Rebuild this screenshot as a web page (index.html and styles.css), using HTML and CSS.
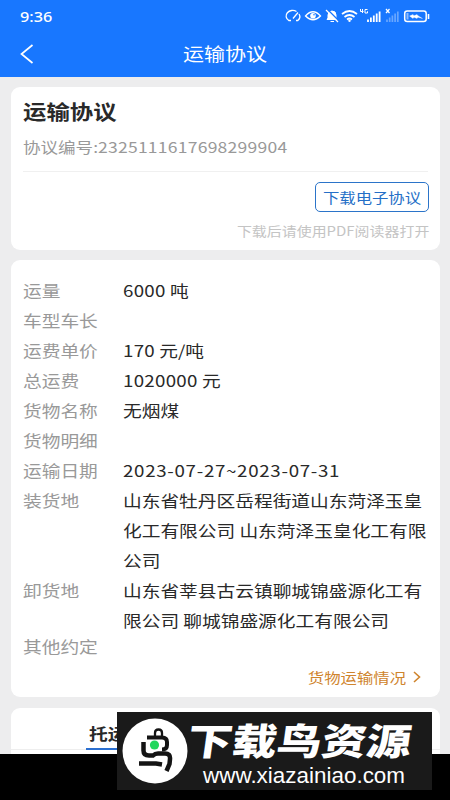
FILE: index.html
```html
<!DOCTYPE html>
<html lang="zh-CN">
<head>
<meta charset="utf-8">
<title>运输协议</title>
<link rel="stylesheet" href="styles.css">
</head>
<body>
<div class="screen">
  <header class="top">
    <div class="status">
      <span class="clock">9:36</span>
      <svg class="status-icons" width="152" height="16" viewBox="0 0 152 16" fill="none" stroke="#fff" stroke-width="1.5">
        <path d="M6 12.500H3.800A6.500 5.500 0 0 1 11.500 3.500M14 6A6.500 5.500 0 0 1 12.800 12.500H11M8 10.500L13 4.500" stroke-width="1.300"/>
        <path d="M20.500 8Q28 -.500 35.500 8Q28 15.500 20.500 8Z" stroke-width="1.300"/><circle cx="28" cy="7.800" r="2.800" fill="#fff" stroke="none"/><circle cx="29" cy="6.800" r=".8" fill="#1877ff" stroke="none"/>
        <path d="M42 11.500L43 10V7Q43 3 47 3T51 7V10L52.500 11.500ZM45.500 13.500H49" fill="#fff" stroke-width="1"/><path d="M42 1L54 13" stroke="#1877ff" stroke-width="1.500"/><path d="M41 2L53 14" stroke-width="1.300"/>
        <path d="M57 6Q64.500 0 72 6M59.500 9Q64.500 5 69.500 9M62 11.500Q64.500 9.500 67 11.500" stroke-width="1.700"/><circle cx="64.500" cy="12.800" r="1.200" fill="#fff" stroke="none"/>
        <path d="M77.500 1V5M75.500 1V3.500H78.500M82.500 1.500H80V5H82.500V3.300" stroke-width="1"/>
        <path d="M83 14V11.500M85.900 14V9.500M88.800 14V7.500M91.700 14V5.500M94.600 14V3.500" stroke-width="1.800"/>
        <path d="M101 1L104.500 5M104.500 1L101 5" stroke-width="1.200"/>
        <path d="M102 14V11.500M104.700 14V9.500M107.400 14V7.500M110.100 14V5.500M112.800 14V3.500" opacity=".35" stroke-width="1.700"/>
        <rect x="119.700" y="3" width="21.500" height="10.500" rx="2.500"/><path d="M143.500 6V11" stroke-width="1.600"/><path d="M122.500 5V11.500" opacity=".5" stroke-width="2"/><path d="M124.500 8L128 6.500L129 7.700L132 6.500L133 7.700L137.500 10.500L133 9.300L132 10.500L129 9.300L128 10.500Z" fill="#fff" stroke-width=".3"/>
      </svg>
    </div>
    <nav class="nav">
      <svg class="back" width="14" height="20" viewBox="0 0 14 20" fill="none" stroke="#fff" stroke-width="1.700"><path d="M12.500 1L1.500 10L12.500 19"/></svg>
      <h1 class="nav-title">运输协议</h1>
    </nav>
  </header>

  <main class="content">
    <section class="card summary">
      <h2 class="heading"><span class="wide">运输协议</span></h2>
      <p class="number"><span class="wide">协议编号:<span class="digits">2325111617698299904</span></span></p>
      <div class="download-area">
        <button class="download"><span class="wide">下载电子协议</span></button>
        <p class="hint"><span class="wide">下载后请使用PDF阅读器打开</span></p>
      </div>
    </section>

    <section class="card details">
      <dl class="fields">
        <dt><span class="wide">运量</span></dt><dd><span class="wide"><span class="amount">6000</span> 吨</span></dd>
        <dt><span class="wide">车型车长</span></dt><dd></dd>
        <dt><span class="wide">运费单价</span></dt><dd><span class="wide"><span class="amount">170</span> 元/吨</span></dd>
        <dt><span class="wide">总运费</span></dt><dd><span class="wide"><span class="amount">1020000</span> 元</span></dd>
        <dt><span class="wide">货物名称</span></dt><dd><span class="wide">无烟煤</span></dd>
        <dt><span class="wide">货物明细</span></dt><dd></dd>
        <dt><span class="wide">运输日期</span></dt><dd><span class="wide date">2023-07-27~2023-07-31</span></dd>
        <dt><span class="wide">装货地</span></dt><dd><span class="wide">山东省牡丹区岳程街道山东菏泽玉皇<br>化工有限公司 山东菏泽玉皇化工有限<br>公司</span></dd>
        <dt><span class="wide">卸货地</span></dt><dd><span class="wide">山东省莘县古云镇聊城锦盛源化工有<br>限公司 聊城锦盛源化工有限公司</span></dd>
        <dt class="last"><span class="wide">其他约定</span></dt><dd class="last"></dd>
      </dl>
      <a class="more"><span class="wide">货物运输情况</span><svg width="8" height="12" viewBox="0 0 8 12" fill="none" stroke="#cf842d" stroke-width="1.600"><path d="M1 1L6.500 6L1 11"/></svg></a>
    </section>

    <section class="card tabs"><div class="tab"><span class="wide">托运方</span></div></section>
  </main>
  <div class="bottom"></div>

  <aside class="banner">
    <svg class="logo" width="66" height="66" viewBox="0 0 66 66" fill="none" stroke="#141414">
      <circle cx="33" cy="33" r="32.500" fill="#fff" stroke="none"/>
      <path d="M33 18V15Q33 11.500 36.500 11.500T40 15V18" stroke-width="2.300"/>
      <path d="M25 19.500H40Q45 19.500 45 24V27Q45 31.500 40 31.500" stroke-width="4"/>
      <path d="M21.500 24V32.500Q21.500 37.500 27 37.500H31Q33 35.500 36 35.500H43Q48.500 35.500 48 41L47.500 46L44.500 53" stroke-width="4.500"/>
      <path d="M17 45.500H34L40 46.500" stroke-width="4.500"/>
      <circle cx="32.500" cy="27" r="4.600" fill="#22d75c" stroke="none"/>
    </svg>
    <div class="brand"><strong>下载鸟资源</strong><span>www.xiazainiao.com</span></div>
  </aside>
</div>
</body>
</html>
```

FILE: styles.css
```css
* { box-sizing: border-box; margin: 0; padding: 0; }
body { background: #ededee; font-family: "Noto Sans CJK SC", sans-serif; color: #292929; }
.screen { position: relative; width: 450px; height: 800px; overflow: hidden; display: flex; flex-direction: column; }
.wide { display: inline-block; white-space: nowrap; transform: scaleX(1.169); transform-origin: left center; }
.top { height: 77px; flex: none; background: #1877ff; color: #fff; }
.status { height: 31px; display: flex; align-items: center; justify-content: space-between; padding: 0 13px 0 20px; }
.clock { font: 500 14.500px "Noto Sans", sans-serif; transform: scaleX(1.120); transform-origin: left; }
.nav { height: 46px; padding: 0 20px; display: grid; grid-template-columns: 14px 1fr 14px; align-items: center; }
.nav-title { font-size: 18px; font-weight: 400; line-height: 44px; padding-bottom: 2px; text-align: center; transform: scaleX(1.169); }
.content { height: 677px; overflow: hidden; padding: 10px 10px 0 11px; display: flex; flex-direction: column; gap: 10px; flex: none; }
.card { background: #fff; border-radius: 9px; flex: none; padding: 0 12px; }
.summary { height: 163px; }
.heading { height: 49px; font-size: 20px; line-height: 49px; font-weight: 700; }
.number { height: 36px; line-height: 22px; font-size: 15px; color: #999; border-bottom: 1px solid #f0f0f0; }
.digits { letter-spacing: .200px; }
.download-area { display: flex; flex-direction: column; align-items: flex-end; padding-top: 10px; margin-right: -1px; }
.download { width: 114px; height: 30px; background: #fff; border: 1.500px solid #2b74c9; border-radius: 5px; color: #256fc7; font: 14px/27px "Noto Sans CJK SC", sans-serif; }
.download .wide { transform-origin: center; }
.hint { font-size: 12.700px; line-height: 20px; color: #c4c4c4; margin-top: 9px; }
.hint .wide { transform: scaleX(1.178); transform-origin: right center; }
.details { height: 437px; padding-top: 15px; }
.fields { display: grid; grid-template-columns: 100px 1fr; font-size: 16px; line-height: 30px; }
.fields dt { color: #999; }
.fields dd { min-height: 30px; }
.fields .last { margin-top: -4px; }
.amount { letter-spacing: .250px; }
.date { letter-spacing: .600px; }
.more { display: flex; justify-content: flex-end; align-items: center; height: 30px; margin-top: 1px; padding-right: 7px; gap: 7px; color: #cf842d; font-size: 14px; }
.more .wide { transform-origin: right center; }
.tabs { height: 60px; margin-top: 1px; padding: 0; }
.tab { height: 42px; border-bottom: 1px solid #eee; padding: 5px 0 0 78px; font-size: 16px; font-weight: 700; line-height: 40px; }
.tab::after { content: ""; display: block; width: 110px; height: 2px; margin: -5px 0 0 -3px; background: #2b6fd0; }
.bottom { flex: 1; background: #000; }
.banner { position: absolute; left: 117px; top: 712px; width: 315px; height: 78px; background: #1a1a1a; display: flex; align-items: center; padding: 2px 5px; color: #fff; }
.logo { flex: none; }
.brand { flex: none; width: 226px; height: 72px; display: flex; flex-direction: column; align-items: flex-start; }
.brand strong { font-size: 37px; line-height: 48px; font-weight: 900; white-space: nowrap; transform: skewX(-8deg) scaleX(1.210); transform-origin: left center; }
.brand span { font: 22px/25px "Liberation Sans", sans-serif; margin-left: 15px; transform: scaleX(1.020); transform-origin: left; }
```
